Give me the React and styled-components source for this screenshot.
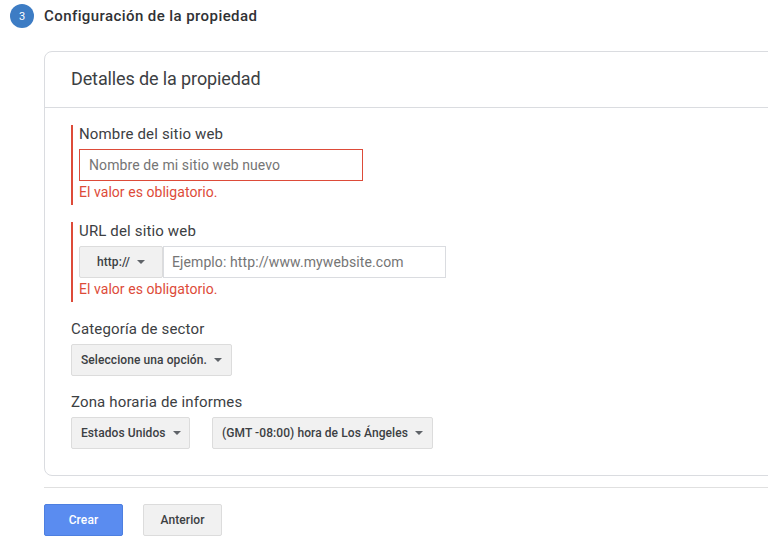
import styled, { createGlobalStyle } from "styled-components";

const GlobalStyle = createGlobalStyle`
  html, body {
    margin: 0;
    padding: 0;
    background: #fff;
    overflow: hidden;
  }
  body {
    font-family: Roboto, "Liberation Sans", sans-serif;
    color: #3c4043;
  }
`;

const Page = styled.div`
  width: 768px;
  height: 546px;
  overflow: hidden;
  padding: 4px 0 0 10px;
  box-sizing: border-box;
`;

const StepHeader = styled.div`
  display: flex;
  align-items: center;
  gap: 10px;
  height: 24px;
`;

const StepBadge = styled.div`
  width: 24px;
  height: 24px;
  border-radius: 50%;
  background: #3d7cc4;
  color: #fff;
  font-size: 11px;
  display: flex;
  align-items: center;
  justify-content: center;
`;

const StepTitle = styled.div`
  font-size: 15px;
  line-height: 26px;
  font-weight: 500;
  letter-spacing: 0.42px;
  color: #303134;
`;

const Body = styled.div`
  margin: 23px 0 0 34px;
  width: 760px;
`;

const Card = styled.div`
  border: 1px solid #dadce0;
  border-radius: 8px;
  height: 425px;
  box-sizing: border-box;
`;

const CardHeader = styled.div`
  height: 56px;
  box-sizing: border-box;
  padding: 15px 0 0 26px;
  border-bottom: 1px solid #dadce0;
  font-size: 18px;
  line-height: 24px;
  letter-spacing: -0.12px;
  color: #3c4043;
`;

const CardBody = styled.div`
  padding: 17px 0 0 26px;
`;

const Field = styled.div`
  display: flex;
  flex-direction: column;
  align-items: flex-start;
  margin-bottom: ${(p) => p.$gap}px;
  ${(p) =>
    p.$error &&
    `
    border-left: 2px solid #dd4b39;
    padding: 0 0 5px 6px;
  `}
`;

const Label = styled.div`
  font-size: 15px;
  line-height: 18px;
  letter-spacing: 0.15px;
  color: #3c4043;
  margin-bottom: 6px;
`;

const TextInput = styled.input`
  box-sizing: border-box;
  width: ${(p) => p.$width}px;
  height: 32px;
  border: 1px solid ${(p) => (p.$error ? "#dd4b39" : "#dadce0")};
  padding: 0 ${(p) => (p.$error ? 9 : 8)}px;
  font: 14px Roboto, "Liberation Sans", sans-serif;
  letter-spacing: 0.1px;
  outline: none;
  background: #fff;
  &::placeholder {
    color: #757575;
    opacity: 1;
  }
`;

const ErrorText = styled.div`
  font-size: 14px;
  line-height: 16px;
  letter-spacing: 0.05px;
  color: #dd4b39;
  margin-top: 3px;
`;

const InputGroup = styled.div`
  display: flex;
`;

const Select = styled.button`
  box-sizing: border-box;
  height: 32px;
  width: ${(p) => p.$width}px;
  display: flex;
  align-items: center;
  justify-content: ${(p) => (p.$center ? "center" : "space-between")};
  gap: 7px;
  padding: 0 ${(p) => (p.$center ? 0 : 9)}px;
  background: #f1f1f1;
  border: 1px solid #dcdcdc;
  border-radius: 2px;
  font: 500 12px Roboto, "Liberation Sans", sans-serif;
  letter-spacing: 0.08px;
  color: #3c4043;
  white-space: nowrap;
`;

const Caret = styled.span`
  width: 0;
  height: 0;
  border-left: 4px solid transparent;
  border-right: 4px solid transparent;
  border-top: 4px solid #5f6368;
`;

const SelectRow = styled.div`
  display: flex;
  gap: 22px;
`;

const Divider = styled.div`
  height: 1px;
  background: #e0e0e0;
  margin-top: 11px;
`;

const Actions = styled.div`
  display: flex;
  gap: 20px;
  margin-top: 16px;
`;

const Button = styled.button`
  box-sizing: border-box;
  width: 79px;
  height: 32px;
  border-radius: 2px;
  font: 500 12px Roboto, "Liberation Sans", sans-serif;
  letter-spacing: 0.1px;
  border: 1px solid ${(p) => (p.$primary ? "#4d7fe0" : "#dcdcdc")};
  background: ${(p) => (p.$primary ? "#5a8cf0" : "#f1f1f1")};
  color: ${(p) => (p.$primary ? "#fff" : "#3c4043")};
`;

export default function App() {
  return (
    <>
      <GlobalStyle />
      <Page>
        <StepHeader>
          <StepBadge>3</StepBadge>
          <StepTitle>Configuración de la propiedad</StepTitle>
        </StepHeader>
        <Body>
          <Card>
            <CardHeader>Detalles de la propiedad</CardHeader>
            <CardBody>
              <Field $error $gap={17}>
                <Label>Nombre del sitio web</Label>
                <TextInput $error $width={284} placeholder="Nombre de mi sitio web nuevo" />
                <ErrorText>El valor es obligatorio.</ErrorText>
              </Field>
              <Field $error $gap={18}>
                <Label>URL del sitio web</Label>
                <InputGroup>
                  <Select $width={84} $center>
                    http:// <Caret />
                  </Select>
                  <TextInput $width={283} placeholder="Ejemplo: http://www.mywebsite.com" />
                </InputGroup>
                <ErrorText>El valor es obligatorio.</ErrorText>
              </Field>
              <Field $gap={17}>
                <Label>Categoría de sector</Label>
                <Select $width={161}>
                  Seleccione una opción. <Caret />
                </Select>
              </Field>
              <Field $gap={0}>
                <Label>Zona horaria de informes</Label>
                <SelectRow>
                  <Select $width={119}>
                    Estados Unidos <Caret />
                  </Select>
                  <Select $width={221}>
                    (GMT -08:00) hora de Los Ángeles <Caret />
                  </Select>
                </SelectRow>
              </Field>
            </CardBody>
          </Card>
          <Divider />
          <Actions>
            <Button $primary>Crear</Button>
            <Button>Anterior</Button>
          </Actions>
        </Body>
      </Page>
    </>
  );
}
